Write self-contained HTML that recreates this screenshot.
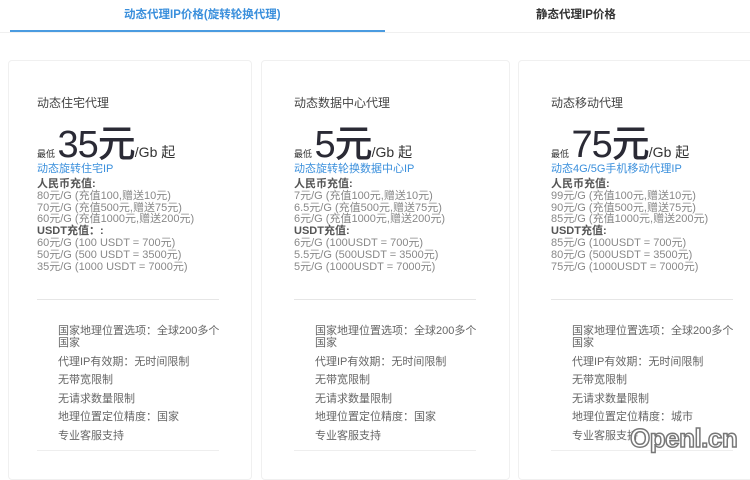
<!DOCTYPE html>
<html><head><meta charset="utf-8"><style>
*{margin:0;padding:0;box-sizing:border-box}
body{width:750px;height:463px;overflow:hidden;background:#fff;font-family:"Liberation Sans","Noto Sans CJK SC",sans-serif;position:relative}
.tab{position:absolute;top:6px;font-size:11.5px;font-weight:bold}
.ul{position:absolute;left:10px;top:30px;width:375px;height:2px;background:#4a9be0}
.tl{position:absolute;left:0;top:32px;width:750px;height:1px;background:#f0f0f0}
.card{position:absolute;top:60px;height:420px;border:1px solid #f0f0f0;border-radius:4px;background:#fff}
.in{position:absolute;left:28px;top:0;width:190px}
.t{position:absolute;top:33px;font-size:12px;color:#444;white-space:nowrap}
.pr{position:absolute;top:52px;white-space:nowrap;color:#2a2a35}
.pr .s{font-size:9px;color:#333}
.pr .b{font-size:38px;font-weight:500;letter-spacing:-1px}
.pr .u{font-size:14px;color:#333}
.bl{position:absolute;top:99px;font-size:11px;color:#3a8fdc;white-space:nowrap}
.lst{position:absolute;top:118px;font-size:11px;line-height:11.8px;color:#888;white-space:nowrap}
.lst b{color:#555}
.hr{position:absolute;top:238px;width:182px;height:1px;background:#e6e6e6}
.hr2{position:absolute;top:389px;width:182px;height:1px;background:#eee}
.f{position:absolute;top:264px;left:21px;font-size:11px;color:#666;line-height:12px;width:172px}
.f div{margin-bottom:6.5px}
</style></head><body>
<div class="tab" style="left:124px;color:#3a8fdc">动态代理IP价格(旋转轮换代理)</div>
<div class="tab" style="left:536px;color:#333">静态代理IP价格</div>
<div class="tl"></div><div class="ul"></div>

<div class="card" style="left:8px;width:244px"><div class="in" style="left:28px">
<div class="t">动态住宅代理</div>
<div class="pr"><span class="s">最低 </span><span class="b">35元</span><span class="u">/Gb 起</span></div>
<div class="bl">动态旋转住宅IP</div>
<div class="lst"><b>人民币充值:</b><br>80元/G (充值100,赠送10元)<br>70元/G (充值500元,赠送75元)<br>60元/G (充值1000元,赠送200元)<br><b>USDT充值：:</b><br>60元/G (100 USDT = 700元)<br>50元/G (500 USDT = 3500元)<br>35元/G (1000 USDT = 7000元)</div>
<div class="hr"></div>
<div class="f"><div>国家地理位置选项：全球200多个国家</div><div>代理IP有效期：无时间限制</div><div>无带宽限制</div><div>无请求数量限制</div><div>地理位置定位精度：国家</div><div>专业客服支持</div></div>
<div class="hr2"></div>
</div></div>

<div class="card" style="left:261px;width:249px"><div class="in" style="left:32px">
<div class="t">动态数据中心代理</div>
<div class="pr"><span class="s">最低 </span><span class="b">5元</span><span class="u">/Gb 起</span></div>
<div class="bl">动态旋转轮换数据中心IP</div>
<div class="lst"><b>人民币充值:</b><br>7元/G (充值100元,赠送10元)<br>6.5元/G (充值500元,赠送75元)<br>6元/G (充值1000元,赠送200元)<br><b>USDT充值:</b><br>6元/G (100USDT = 700元)<br>5.5元/G (500USDT = 3500元)<br>5元/G (1000USDT = 7000元)</div>
<div class="hr"></div>
<div class="f"><div>国家地理位置选项：全球200多个国家</div><div>代理IP有效期：无时间限制</div><div>无带宽限制</div><div>无请求数量限制</div><div>地理位置定位精度：国家</div><div>专业客服支持</div></div>
<div class="hr2"></div>
</div></div>

<div class="card" style="left:518px;width:240px"><div class="in" style="left:32px">
<div class="t">动态移动代理</div>
<div class="pr"><span class="s">最低 </span><span class="b">75元</span><span class="u">/Gb 起</span></div>
<div class="bl">动态4G/5G手机移动代理IP</div>
<div class="lst"><b>人民币充值:</b><br>99元/G (充值100元,赠送10元)<br>90元/G (充值500元,赠送75元)<br>85元/G (充值1000元,赠送200元)<br><b>USDT充值:</b><br>85元/G (100USDT = 700元)<br>80元/G (500USDT = 3500元)<br>75元/G (1000USDT = 7000元)</div>
<div class="hr"></div>
<div class="f"><div>国家地理位置选项：全球200多个国家</div><div>代理IP有效期：无时间限制</div><div>无带宽限制</div><div>无请求数量限制</div><div>地理位置定位精度：城市</div><div>专业客服支持</div></div>
<div class="hr2"></div>
</div></div>

<div style="position:absolute;left:630px;top:423px;font-size:26px;color:#fff;-webkit-text-stroke:1.5px #777;font-weight:bold;letter-spacing:-0.5px">Openl.cn</div>
</body></html>
